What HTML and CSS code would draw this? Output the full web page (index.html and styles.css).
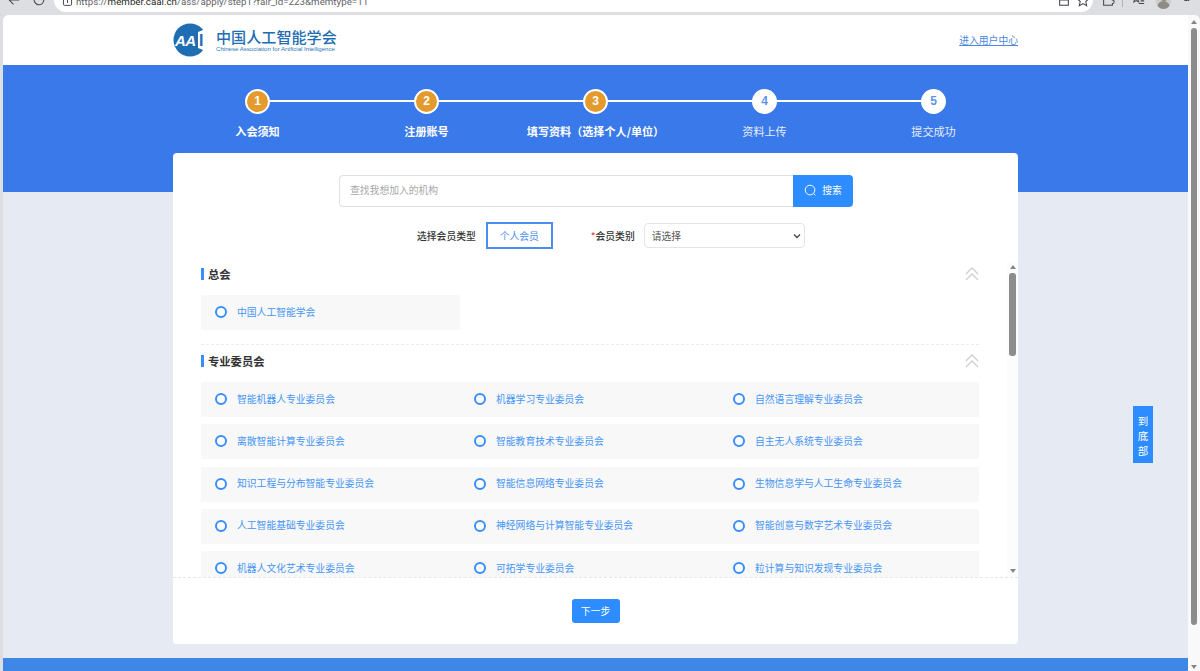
FILE: index.html
```html
<!DOCTYPE html>
<html lang="zh-CN">
<head>
<meta charset="utf-8">
<title>中国人工智能学会 入会申请</title>
<link rel="stylesheet" href="styles.css">
</head>
<body>
<div class="toolbar">
  <div class="toolbar-row">
    <svg class="tb-icon back" viewBox="0 0 16 16"><path d="M14 8H2.500M7.500 3 2.500 8l5 5"/></svg>
    <svg class="tb-icon reload" viewBox="0 0 16 16"><path d="M13.500 8a5.500 5.500 0 1 1-1.600-3.900L13.500 6M13.500 2v4h-4"/></svg>
    <div class="urlbar">
      <svg class="tb-icon site" viewBox="0 0 16 16"><rect x="3" y="2" width="10" height="12" rx="1.500"/><path d="M8 7v4"/></svg>
      <span class="url"><span class="url-dim">https://</span>member.caai.cn<span class="url-dim">/ass/apply/step1?fair_id=223&amp;memtype=11</span></span>
      <svg class="tb-icon note" viewBox="0 0 16 16"><rect x="3" y="2" width="10" height="12"/><path d="M3 8h10"/></svg>
      <svg class="tb-icon star" viewBox="0 0 16 16"><path d="M8 1.500l2 4.500 4.800.5-3.600 3.200 1 4.800L8 12.100l-4.200 2.400 1-4.800L1.200 6.500 6 6z"/></svg>
    </div>
    <svg class="tb-icon puzzle" viewBox="0 0 16 16"><path d="M3 5h3a2 2 0 1 1 4 0h3v3a2 2 0 1 1 0 4v2H3z"/></svg>
    <span class="tb-divider"></span>
    <svg class="tb-icon favs" viewBox="0 0 16 16"><path d="M6 2l1.300 3 3 .3-2.300 2 .7 3L6 8.700 3.300 10.300l.7-3-2.300-2 3-.3zM10 6h5M11 9h4M9 12h6"/></svg>
    <span class="avatar"><span class="avatar-head"></span><span class="avatar-body"></span></span>
    <span class="dots">•••</span>
  </div>
</div>

<div class="window">
  <div class="page">
    <header class="site-header">
      <div class="site-header-inner">
        <div class="brand">
          <svg class="logo" viewBox="0 0 34 34">
            <circle cx="17" cy="17" r="16.500" fill="#1f6db3"/>
            <path d="M25 9 L35 5 L35 29 L25 25 Z" fill="#fff"/>
            <text class="logo-text" x="2" y="23">AA</text>
            <text class="logo-i" x="26" y="23">I</text>
          </svg>
          <div class="brand-names">
            <div class="brand-cn">中国人工智能学会</div>
            <div class="brand-en">Chinese Association for Artificial Intelligence</div>
          </div>
        </div>
        <a class="user-link" href="#">进入用户中心</a>
      </div>
    </header>

    <section class="banner">
      <ol class="steps">
        <li class="step done"><span class="step-dot">1</span><span class="step-label">入会须知</span></li>
        <li class="step done"><span class="step-dot">2</span><span class="step-label">注册账号</span></li>
        <li class="step done"><span class="step-dot">3</span><span class="step-label">填写资料（选择个人/单位）</span></li>
        <li class="step"><span class="step-dot">4</span><span class="step-label">资料上传</span></li>
        <li class="step"><span class="step-dot">5</span><span class="step-label">提交成功</span></li>
      </ol>
    </section>

    <main class="main">
      <div class="card">
        <div class="search">
          <input class="search-input" type="text" placeholder="查找我想加入的机构">
          <button class="search-btn" type="button">
            <svg class="search-icon" viewBox="0 0 14 14"><circle cx="6.500" cy="6.500" r="5.200"/><path d="M10.300 10.300l2 2"/></svg>
            搜索
          </button>
        </div>

        <div class="filters">
          <span class="filter-label">选择会员类型</span>
          <span class="type-box">个人会员</span>
          <span class="filter-label category"><span class="required">*</span>会员类别</span>
          <span class="select-wrap">
            <select class="category-select"><option>请选择</option></select>
            <svg class="select-arrow" viewBox="0 0 8 6"><path d="M1 1.500l3 3 3-3"/></svg>
          </span>
        </div>

        <div class="scroller">
          <section class="group">
            <div class="group-head">
              <h2 class="group-title">总会</h2>
              <svg class="collapse" viewBox="0 0 14 14"><path d="M1 7l6-6 6 6M1 13l6-6 6 6"/></svg>
            </div>
            <div class="options">
              <label class="option"><span class="radio"></span><span class="option-text">中国人工智能学会</span></label>
            </div>
          </section>
          <section class="group">
            <div class="group-head">
              <h2 class="group-title">专业委员会</h2>
              <svg class="collapse" viewBox="0 0 14 14"><path d="M1 7l6-6 6 6M1 13l6-6 6 6"/></svg>
            </div>
            <div class="options">
              <label class="option"><span class="radio"></span><span class="option-text">智能机器人专业委员会</span></label>
              <label class="option"><span class="radio"></span><span class="option-text">机器学习专业委员会</span></label>
              <label class="option"><span class="radio"></span><span class="option-text">自然语言理解专业委员会</span></label>
              <label class="option"><span class="radio"></span><span class="option-text">离散智能计算专业委员会</span></label>
              <label class="option"><span class="radio"></span><span class="option-text">智能教育技术专业委员会</span></label>
              <label class="option"><span class="radio"></span><span class="option-text">自主无人系统专业委员会</span></label>
              <label class="option"><span class="radio"></span><span class="option-text">知识工程与分布智能专业委员会</span></label>
              <label class="option"><span class="radio"></span><span class="option-text">智能信息网络专业委员会</span></label>
              <label class="option"><span class="radio"></span><span class="option-text">生物信息学与人工生命专业委员会</span></label>
              <label class="option"><span class="radio"></span><span class="option-text">人工智能基础专业委员会</span></label>
              <label class="option"><span class="radio"></span><span class="option-text">神经网络与计算智能专业委员会</span></label>
              <label class="option"><span class="radio"></span><span class="option-text">智能创意与数字艺术专业委员会</span></label>
              <label class="option"><span class="radio"></span><span class="option-text">机器人文化艺术专业委员会</span></label>
              <label class="option"><span class="radio"></span><span class="option-text">可拓学专业委员会</span></label>
              <label class="option"><span class="radio"></span><span class="option-text">粒计算与知识发现专业委员会</span></label>
            </div>
          </section>
          <div class="inner-scrollbar">
            <span class="arrow-up"></span>
            <span class="inner-thumb"></span>
            <span class="arrow-down"></span>
          </div>
        </div>

        <div class="card-footer">
          <button class="next-btn" type="button">下一步</button>
        </div>
      </div>
    </main>

    <footer class="site-footer"></footer>
    <a class="to-bottom" href="#">到<br>底<br>部</a>
  </div>

  <div class="page-scrollbar">
    <span class="arrow-up"></span>
    <span class="page-thumb"></span>
    <span class="arrow-down"></span>
  </div>
</div>
</body>
</html>
```

FILE: styles.css
```css
* { box-sizing: border-box; }

html, body { height: 100%; }

body {
  margin: 0;
  height: 671px;
  overflow: hidden;
  display: flex;
  flex-direction: column;
  background: #dddee2;
  font-family: "Noto Sans CJK SC", "Liberation Sans", sans-serif;
  font-size: 10px;
  color: #333;
}

/* Browser toolbar (cut off by the top of the picture) */
.toolbar { height: 15px; overflow: hidden; flex: none; }

.toolbar-row {
  display: flex;
  align-items: center;
  height: 24px;
  margin-top: -12px;
}

.tb-icon {
  width: 14px;
  height: 14px;
  flex: none;
  fill: none;
  stroke: #44474c;
  stroke-width: 1.200;
}

.back { margin-left: 7px; }
.reload { margin-left: 11px; }

.urlbar {
  display: flex;
  align-items: center;
  width: 1039px;
  height: 24px;
  margin-left: 8px;
  padding: 0 3px 0 7px;
  background: #fff;
  border-radius: 12px;
}

.site { width: 13px; height: 13px; }

.url {
  flex: 1;
  margin-left: 2px;
  padding-top: 3px;
  font-family: Roboto, sans-serif;
  font-size: 9.750px;
  line-height: 21px;
  color: #1f1f1f;
  white-space: nowrap;
}

.url-dim { color: #5f6368; }

.note { margin-right: 5px; }
.puzzle { margin-left: 8px; }

.tb-divider {
  width: 1px;
  height: 14px;
  margin-left: 7px;
  background: #b0b2b6;
}

.favs { margin-left: 8px; }

.avatar {
  position: relative;
  width: 15px;
  height: 18px;
  margin-left: 11px;
  overflow: hidden;
  flex: none;
  border-radius: 8px;
  background: #cfcdc8;
}

.avatar-head {
  position: absolute;
  top: 2px;
  left: 3.500px;
  width: 8px;
  height: 8px;
  border-radius: 50%;
  background: #8f8c85;
}

.avatar-body {
  position: absolute;
  top: 10px;
  left: 1px;
  width: 13px;
  height: 10px;
  border-radius: 7px 7px 0 0;
  background: #8f8c85;
}

.dots {
  margin-left: 13px;
  font-size: 6px;
  letter-spacing: -0.500px;
  color: #333;
  font-family: "Liberation Sans", sans-serif;
}

/* Window */
.window {
  position: relative;
  flex: 1;
  display: flex;
  margin-left: 3px;
  overflow: hidden;
  background: #fff;
  border-radius: 6px 6px 0 0;
  min-height: 0;
}

.page {
  position: relative;
  width: 1185px;
  flex: none;
  display: flex;
  flex-direction: column;
  background: #e6eaf3;
}

.page-scrollbar {
  position: relative;
  flex: 1;
  background: #f9f9f9;
}

.page-thumb {
  position: absolute;
  top: 13px;
  left: 2.700px;
  width: 6px;
  height: 597px;
  border-radius: 3px;
  background: #8c8c8c;
}

.arrow-up,
.arrow-down {
  position: absolute;
  left: 3px;
  width: 0;
  height: 0;
  border-left: 3px solid transparent;
  border-right: 3px solid transparent;
}

.arrow-up { top: 5px; border-bottom: 4px solid #858585; }
.arrow-down { bottom: 2px; border-top: 4px solid #858585; }

/* Site header */
.site-header { height: 50px; flex: none; background: #fff; }

.site-header-inner {
  display: flex;
  align-items: center;
  justify-content: space-between;
  width: 845px;
  height: 100%;
  margin: 0 auto;
}

.brand { display: flex; align-items: center; gap: 9px; }

.logo { width: 34px; height: 34px; flex: none; }

.logo-text {
  font-family: "Liberation Sans", sans-serif;
  font-size: 15px;
  font-weight: 700;
  font-style: italic;
  fill: #fff;
  letter-spacing: -0.500px;
}

.logo-i {
  font-family: "Liberation Sans", sans-serif;
  font-size: 16px;
  font-weight: 700;
  fill: #1f6db3;
}

.brand-names { display: flex; flex-direction: column; }

.brand-cn {
  font-size: 15.100px;
  font-weight: 500;
  line-height: 18px;
  color: #1f6db3;
  white-space: nowrap;
}

.brand-en {
  font-family: "Liberation Sans", sans-serif;
  font-size: 6.100px;
  line-height: 8px;
  color: #2a76bb;
  white-space: nowrap;
}

.user-link {
  font-size: 9.800px;
  color: #4c87de;
  text-decoration: underline;
}

/* Progress banner */
.banner {
  height: 127px;
  flex: none;
  padding-top: 24px;
  background: #3a79ea;
}

.steps {
  display: flex;
  width: 845px;
  margin: 0 auto;
  padding: 0;
  list-style: none;
}

.step {
  position: relative;
  flex: 1;
  display: flex;
  flex-direction: column;
  align-items: center;
  gap: 9px;
}

.step:not(:last-child)::after {
  content: "";
  position: absolute;
  top: 11px;
  left: 50%;
  width: 100%;
  height: 2px;
  background: #fff;
}

.step-dot {
  position: relative;
  z-index: 1;
  width: 25px;
  height: 25px;
  border: 2px solid #fff;
  border-radius: 50%;
  background: #fff;
  font-family: "Liberation Sans", sans-serif;
  font-size: 12px;
  font-weight: 700;
  line-height: 21px;
  text-align: center;
  color: #5f93ec;
}

.step-label {
  font-size: 11.100px;
  line-height: 16px;
  color: #e6edfc;
  white-space: nowrap;
}

.step.done .step-dot { background: #e59a2e; color: #fff; }
.step.done .step-label { color: #fff; font-weight: 700; }

/* Card */
.main {
  flex: 1;
  min-height: 0;
  padding-bottom: 14px;
}

.card {
  display: flex;
  flex-direction: column;
  width: 845px;
  height: 491px;
  margin: -39px auto 0;
  padding-top: 22px;
  background: #fff;
  border-radius: 4px;
  position: relative;
}

.search {
  display: flex;
  flex: none;
  width: 514px;
  height: 32px;
  margin-left: 166px;
}

.search-input {
  flex: 1;
  min-width: 0;
  padding: 0 10px 2px;
  border: 1px solid #e1e1e1;
  border-right: 0;
  border-radius: 4px 0 0 4px;
  outline: 0;
  font: inherit;
  font-size: 9.800px;
}

.search-input::placeholder { color: #a8a8a8; opacity: 1; }

.search-btn {
  display: flex;
  align-items: center;
  justify-content: center;
  gap: 5px;
  width: 60px;
  padding: 0 0 2px;
  border: 0;
  border-radius: 0 4px 4px 0;
  background: #2d8cff;
  color: #fff;
  font: inherit;
  font-size: 9.800px;
}

.search-icon {
  width: 13px;
  height: 13px;
  fill: none;
  stroke: #fff;
  stroke-width: 1;
}

.filters {
  display: flex;
  align-items: center;
  flex: none;
  height: 27px;
  margin-top: 15px;
  padding-left: 244px;
}

.filter-label {
  font-size: 9.800px;
  font-weight: 500;
  color: #333;
  white-space: nowrap;
}

.type-box {
  width: 67px;
  height: 27px;
  margin-left: 10px;
  border: 2px solid #4a8ff0;
  font-size: 9.800px;
  line-height: 24px;
  text-align: center;
  color: #4a8ff0;
}

.category { margin-left: 38px; }
.required { color: #e8473f; }

.select-wrap {
  position: relative;
  display: flex;
  margin-left: 9px;
}

.category-select {
  width: 161px;
  height: 25px;
  padding: 0 7px;
  border: 1px solid #e4e4e4;
  border-radius: 4px;
  background: #fff;
  appearance: none;
  font: inherit;
  font-size: 9.800px;
  color: #555;
}

.select-arrow {
  position: absolute;
  top: 10px;
  right: 4px;
  width: 8px;
  height: 6px;
  fill: none;
  stroke: #444;
  stroke-width: 1.300;
  pointer-events: none;
}

/* Scrolling list */
.scroller {
  position: relative;
  flex: 1;
  min-height: 0;
  margin-top: 13px;
  padding: 0 39px 0 28px;
  overflow: hidden;
}

.group { padding-bottom: 4px; }

.group:not(:last-of-type) {
  border-bottom: 1px dashed #ececec;
  padding-bottom: 14px;
  margin-bottom: 4px;
}

.group-head {
  display: flex;
  align-items: center;
  justify-content: space-between;
  height: 24px;
  margin-bottom: 9px;
}

.group-title {
  margin: 0;
  padding-left: 4px;
  border-left: 3px solid #3a8dff;
  font-size: 11.300px;
  font-weight: 700;
  line-height: 12px;
  color: #333;
}

.collapse {
  width: 14px;
  height: 14px;
  fill: none;
  stroke: #cfcfcf;
  stroke-width: 1.300;
}

.options {
  display: grid;
  grid-template-columns: 259px 259px 1fr;
  row-gap: 7.300px;
}

.option {
  display: flex;
  align-items: center;
  gap: 10px;
  height: 35px;
  padding-left: 14px;
  background: #f8f8f8;
  font-size: 9.800px;
  color: #4595f7;
  white-space: nowrap;
}

.option-text { padding-bottom: 2px; }

.radio {
  width: 12px;
  height: 12px;
  flex: none;
  margin-bottom: 1px;
  border: 2px solid #3a8dff;
  border-radius: 50%;
  background: #fff;
}

.inner-scrollbar {
  position: absolute;
  top: 0;
  right: 0;
  bottom: 0;
  width: 11px;
  background: #fcfcfc;
}

.inner-scrollbar .arrow-up { top: 3px; left: 2.500px; }
.inner-scrollbar .arrow-down { bottom: 4px; left: 2.500px; }

.inner-thumb {
  position: absolute;
  top: 11px;
  left: 2.300px;
  width: 6.300px;
  height: 83px;
  border-radius: 3px;
  background: #8c8c8c;
}

.card-footer {
  display: flex;
  align-items: center;
  justify-content: center;
  flex: none;
  height: 67px;
  border-top: 1px dashed #e6e6e6;
}

.next-btn {
  width: 48px;
  height: 24px;
  border: 0;
  border-radius: 3px;
  background: #2d8cff;
  color: #fff;
  font: inherit;
  font-size: 9.800px;
}

/* Footer and floating link */
.site-footer { flex: none; height: 13px; background: #3f87e6; }

.to-bottom {
  position: absolute;
  top: 391px;
  left: 1130px;
  width: 20px;
  height: 57px;
  padding-top: 7px;
  background: #2d8cff;
  color: #fff;
  font-size: 10.500px;
  line-height: 15px;
  text-align: center;
  text-decoration: none;
}
```
